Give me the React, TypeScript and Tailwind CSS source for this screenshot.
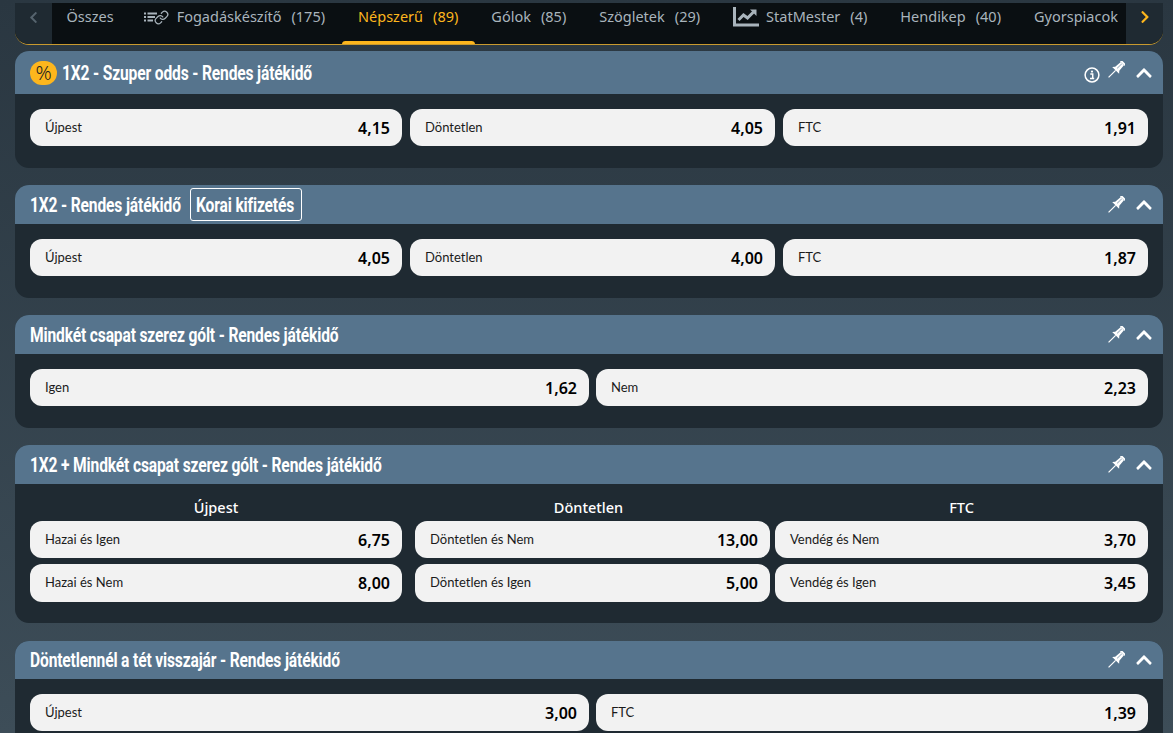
import { FaChevronUp, FaChevronLeft, FaChevronRight } from "react-icons/fa";
import { Link } from "lucide-react";

const titleFont = "font-['Roboto',sans-serif] font-bold text-[20px] tracking-[-0.2px] text-white origin-left scale-x-[0.78] whitespace-nowrap";
const groupTitle = "h-[25px] text-center text-[14.5px] font-medium leading-[22px] text-white";

function ChartIcon() {
  return (
    <svg width="26" height="20" viewBox="0 0 26 20" fill="none" className="text-[#a9b4bc]">
      <path d="M1.5 0v18H26" stroke="currentColor" strokeWidth="3" />
      <path d="M5.5 13l5-5 4 3 6-6" stroke="currentColor" strokeWidth="3" />
      <path d="M17 2.5h6.5v6.5z" fill="currentColor" />
    </svg>
  );
}

function BuilderIcon() {
  return (
    <div className="relative -ml-[3px] mr-[8px] h-[14px] w-[25px]">
      <svg width="14" height="14" viewBox="0 0 14 14" fill="none" className="text-[#a9b4bc]">
        <path d="M0 3.5h2M0 7h2M0 10.5h2M3.5 3.5H13M3.5 7H11M3.5 10.5H9" stroke="currentColor" strokeWidth="1.8" />
      </svg>
      <Link size={15} strokeWidth={2} className="absolute right-0 top-0 text-[#a9b4bc]" />
    </div>
  );
}

function InfoIcon() {
  return (
    <svg width="16" height="16" viewBox="0 0 16 16" fill="none" className="text-white">
      <circle cx="8" cy="8" r="6.9" stroke="currentColor" strokeWidth="1.5" />
      <path d="M6.3 7h2.4v4.2M6 11.4h4.2" stroke="currentColor" strokeWidth="1.5" />
      <circle cx="8" cy="4.6" r="1.1" fill="currentColor" />
    </svg>
  );
}

function PinIcon({ raised }: { raised?: boolean }) {
  return (
    <svg width="18" height="18" viewBox="0 0 18 18" className={`text-white ${raised ? "mb-[5px]" : ""}`} fill="currentColor">
      <g transform="rotate(45 9 9)">
        <rect x="5.6" y="-2" width="6.8" height="2" rx="0.6" />
        <path d="M6.8 0h4.4l.7 7.2 2 2.3H4.1l2-2.3z" />
        <path d="M8.2 0.5h0.9v6.5h-0.9z" fill="#9fb2c2" />
        <rect x="8.4" y="9.5" width="1.2" height="10" />
      </g>
    </svg>
  );
}

function Tab({ label, count, icon, active, last }: { label: string; count?: string; icon?: React.ReactNode; active?: boolean; last?: boolean }) {
  return (
    <div className={`relative flex h-full shrink-0 items-center pb-[13px] pl-[16.5px] ${last ? "" : "pr-[16.5px]"} ${active ? "text-[#fdb61d]" : "text-[#a9b4bc]"}`}>
      {icon}
      <span>{label}</span>
      {count && <span className="ml-[10px]">{count}</span>}
      {active && <div className="absolute bottom-[-4px] left-0 right-0 h-[7px] rounded-full bg-[#fdb61d]" />}
    </div>
  );
}

function Odd({ label, value, tall }: { label: string; value: string; tall?: boolean }) {
  return (
    <div className={`flex items-center justify-between rounded-[12px] bg-[#f2f2f2] pl-[15px] pr-[12px] text-[#1b1b1b] ${tall ? "h-[38px]" : "h-[37px]"}`}>
      <span className="font-['Lato',sans-serif] text-[13px]">{label}</span>
      <span className="text-[16px] font-semibold text-black">{value}</span>
    </div>
  );
}

function Market({ title, size = "h-[39px]", promo, children, extra, pad }: { title: string; size?: string; promo?: boolean; children: React.ReactNode; extra?: React.ReactNode; pad?: string }) {
  return (
    <section className="overflow-hidden rounded-[14px] bg-[#1f2a32]">
      <header className={`flex items-center bg-[#56748d] pl-[15px] pr-[10px] ${size}`}>
        {promo && (
          <div className="mr-[5px] flex h-[24px] w-[27px] shrink-0 items-center justify-center rounded-full bg-[#fdb61d] text-[20px] font-light leading-none text-[#222]">%</div>
        )}
        <div className={titleFont}>{title}</div>
        {extra}
        <div className="ml-auto flex items-center">
          {promo && <div className="mr-[7px] mt-[5px]"><InfoIcon /></div>}
          <PinIcon raised={promo} />
          <FaChevronUp className="ml-[10px] text-[18px] text-white" />
        </div>
      </header>
      <div className={pad ?? "px-[15px] pt-[15px] pb-[22px]"}>{children}</div>
    </section>
  );
}

export default function App() {
  return (
    <div className="h-[733px] w-[1173px] overflow-hidden bg-gradient-to-b from-[#2a3741] to-[#3d4d58] pl-[15px] pr-[10px] pt-[3px] font-['Noto_Sans',sans-serif]">
      <nav className="flex h-[42px] items-stretch rounded-b-[14px] border-b border-[#c99a2e] bg-[#0a0f12] text-[14.5px]">
        <div className="flex w-[37px] shrink-0 items-center justify-center rounded-bl-[14px] bg-[#1f2a32] pb-[13px]">
          <FaChevronLeft className="text-[13px] text-[#56646e]" />
        </div>
        <div className="-ml-[2px] flex min-w-0 flex-1 overflow-hidden">
          <Tab label="Összes" />
          <Tab label="Fogadáskészítő" count="(175)" icon={<BuilderIcon />} />
          <Tab label="Népszerű" count="(89)" active />
          <Tab label="Gólok" count="(85)" />
          <Tab label="Szögletek" count="(29)" />
          <Tab label="StatMester" count="(4)" icon={<span className="mr-[7px]"><ChartIcon /></span>} />
          <Tab label="Hendikep" count="(40)" />
          <Tab label="Gyorspiacok" last />
        </div>
        <div className="flex w-[37px] shrink-0 items-center justify-center rounded-br-[14px] bg-[#1f2a32] pb-[13px]">
          <FaChevronRight className="text-[14px] text-[#fdb61d]" />
        </div>
      </nav>

      <div className="mt-[6px] flex flex-col gap-[17px]">
        <Market title="1X2 - Szuper odds - Rendes játékidő" size="h-[43px]" promo>
          <div className="grid grid-cols-[372px_365px_365px] gap-[8px]">
            <Odd label="Újpest" value="4,15" />
            <Odd label="Döntetlen" value="4,05" />
            <Odd label="FTC" value="1,91" />
          </div>
        </Market>

        <Market
          title="1X2 - Rendes játékidő"
          extra={
            <div className="ml-[-33px] flex h-[33px] w-[112px] shrink-0 items-center rounded-[3px] border border-white px-[5px]">
              <span className={titleFont}>Korai kifizetés</span>
            </div>
          }
        >
          <div className="grid grid-cols-[372px_365px_365px] gap-[8px]">
            <Odd label="Újpest" value="4,05" />
            <Odd label="Döntetlen" value="4,00" />
            <Odd label="FTC" value="1,87" />
          </div>
        </Market>

        <Market title="Mindkét csapat szerez gólt - Rendes játékidő">
          <div className="grid grid-cols-[559px_552px] gap-[7px]">
            <Odd label="Igen" value="1,62" />
            <Odd label="Nem" value="2,23" />
          </div>
        </Market>

        <Market title="1X2 + Mindkét csapat szerez gólt - Rendes játékidő" pad="px-[15px] pt-[12px] pb-[21px]">
          <div className="flex">
            <div className="flex w-[372px] flex-col">
              <div className={groupTitle}>Újpest</div>
              <div className="flex flex-col gap-[6px]">
                <Odd label="Hazai és Igen" value="6,75" />
                <Odd label="Hazai és Nem" value="8,00" tall />
              </div>
            </div>
            <div className="ml-[13px] flex w-[355px] flex-col">
              <div className={`${groupTitle} pr-[8px]`}>Döntetlen</div>
              <div className="flex flex-col gap-[6px]">
                <Odd label="Döntetlen és Nem" value="13,00" />
                <Odd label="Döntetlen és Igen" value="5,00" tall />
              </div>
            </div>
            <div className="ml-[5px] flex w-[373px] flex-col">
              <div className={groupTitle}>FTC</div>
              <div className="flex flex-col gap-[6px]">
                <Odd label="Vendég és Nem" value="3,70" />
                <Odd label="Vendég és Igen" value="3,45" tall />
              </div>
            </div>
          </div>
        </Market>

        <div className="pt-px">
          <Market title="Döntetlennél a tét visszajár - Rendes játékidő" size="h-[38px]">
            <div className="grid grid-cols-[559px_552px] gap-[7px]">
              <Odd label="Újpest" value="3,00" />
              <Odd label="FTC" value="1,39" />
            </div>
          </Market>
        </div>
      </div>
    </div>
  );
}
